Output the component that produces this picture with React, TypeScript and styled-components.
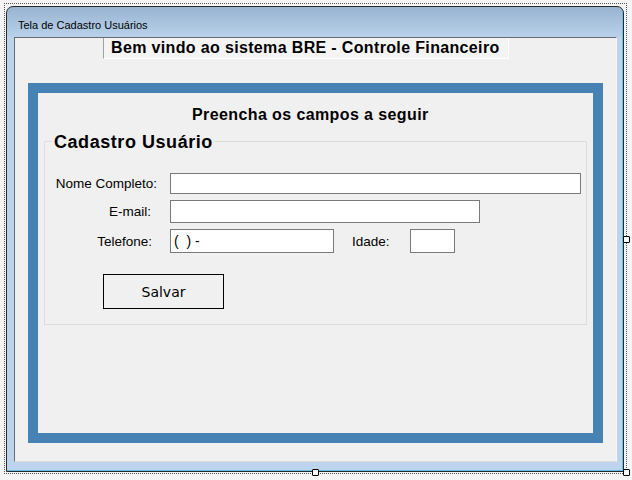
import React from "react";
import styled, { createGlobalStyle } from "styled-components";

const Global = createGlobalStyle`
  html, body { margin: 0; padding: 0; background: #f4f4f4; }
  body { font-family: "Liberation Sans", Arial, sans-serif; color: #000; }
  * { box-sizing: border-box; }
`;

const Stage = styled.div`
  width: 632px;
  height: 480px;
  padding: 3px 0 0 4px;
  background: #f4f4f4;
`;

const Selection = styled.div`
  position: relative;
  width: fit-content;
  border: 1px dotted #555;
  padding: 2px 2px 1px 1px;
`;

const Handle = styled.div<{ $left?: number; $right?: number; $top?: number; $bottom?: number }>`
  position: absolute;
  width: 7px;
  height: 7px;
  background: #fff;
  border: 1px solid #000;
  border-radius: 1px;
  ${(p) => (p.$left !== undefined ? `left: ${p.$left}px;` : "")}
  ${(p) => (p.$right !== undefined ? `right: ${p.$right}px;` : "")}
  ${(p) => (p.$top !== undefined ? `top: ${p.$top}px;` : "")}
  ${(p) => (p.$bottom !== undefined ? `bottom: ${p.$bottom}px;` : "")}
`;

const Window = styled.div`
  width: 618px;
  height: 466px;
  display: flex;
  flex-direction: column;
  border: 1px solid #2a2a2a;
  border-radius: 7px 7px 0 0;
  background: linear-gradient(to bottom, #99b4d1 0px, #b9d1ea 30px, #bcd4ec 30px);
  box-shadow: inset -1px -1px 0 #5cc3ea;
`;

const TitleBar = styled.div`
  height: 30px;
  padding: 12px 0 0 11px;
  font-family: "Liberation Sans", Arial, sans-serif;
  font-size: 11px;
  line-height: 13px;
  color: #000;
`;

const Client = styled.div`
  flex: 1;
  margin: 0 6px 9px 7px;
  border: 1px solid;
  border-color: #6a6a6a #f8f8f8 #dcdcdc #6a6a6a;
  background: #f0f0f0;
  display: flex;
  flex-direction: column;
`;

const Header = styled.div`
  margin-left: 88px;
  width: 406px;
  height: 21px;
  padding-left: 7px;
  background: #f4f4f4;
  border-left: 1px solid #a0a0a0;
  border-right: 1px solid #fff;
  border-bottom: 1px solid #fff;
  font-size: 16px;
  font-weight: bold;
  letter-spacing: 0.35px;
  line-height: 20px;
  white-space: nowrap;
`;

const Frame = styled.div`
  margin: 24px 0 0 13px;
  width: 575px;
  height: 360px;
  border: 10px solid #4682b4;
  padding: 12px 6px 0;
  display: flex;
  flex-direction: column;
`;

const Heading = styled.div`
  margin-left: 148px;
  font-size: 16px;
  font-weight: bold;
  letter-spacing: 0.4px;
  line-height: 20px;
  white-space: nowrap;
`;

const Group = styled.fieldset`
  margin: 5px 0 0;
  padding: 0;
  min-width: 0;
  height: 195px;
  border: 1px solid #dcdcdc;
`;

const Legend = styled.legend`
  margin-left: 7px;
  padding: 2px 2px 0;
  font-size: 18px;
  font-weight: bold;
  letter-spacing: 0.55px;
  line-height: 20px;
`;

const Rows = styled.div`
  display: flex;
  flex-direction: column;
  gap: 6px;
  padding-top: 21px;
`;

const Row = styled.div`
  display: flex;
  align-items: center;
`;

const Label = styled.label<{ $pr: number }>`
  width: 113px;
  padding-right: ${(p) => p.$pr}px;
  text-align: right;
  font-size: 13.5px;
  white-space: nowrap;
`;

const SideLabel = styled.label`
  width: 58px;
  margin-left: 18px;
  font-size: 13.5px;
`;

const Field = styled.input<{ $w: number; $h: number; $ml?: number }>`
  width: ${(p) => p.$w}px;
  height: ${(p) => p.$h}px;
  margin: 0 0 0 ${(p) => p.$ml ?? 12}px;
  padding: 0 3px;
  border: 1px solid #7a7a7a;
  border-radius: 0;
  background: #fff;
  font-family: "Liberation Sans", Arial, sans-serif;
  font-size: 14px;
  color: #000;
  outline: none;
`;

const SaveButton = styled.button`
  margin: 21px 0 0 58px;
  width: 121px;
  height: 35px;
  border: 1px solid #000;
  border-radius: 0;
  background: #f0f0f0;
  font-family: "DejaVu Sans", sans-serif;
  font-size: 14px;
  color: #000;
  padding: 0;
`;

export default function App() {
  return (
    <>
      <Global />
      <Stage>
        <Selection>
          <Window>
            <TitleBar>Tela de Cadastro Usuários</TitleBar>
            <Client>
              <Header>Bem vindo ao sistema BRE - Controle Financeiro</Header>
              <Frame>
                <Heading>Preencha os campos a seguir</Heading>
                <Group>
                  <Legend>Cadastro Usuário</Legend>
                  <Rows>
                    <Row>
                      <Label $pr={1}>Nome Completo:</Label>
                      <Field $w={411} $h={21} readOnly />
                    </Row>
                    <Row>
                      <Label $pr={7}>E-mail:</Label>
                      <Field $w={310} $h={23} readOnly />
                    </Row>
                    <Row>
                      <Label $pr={6}>Telefone:</Label>
                      <Field $w={164} $h={24} readOnly value={"(\u00a0\u00a0) -"} />
                      <SideLabel>Idade:</SideLabel>
                      <Field $w={45} $h={24} $ml={0} readOnly />
                    </Row>
                  </Rows>
                  <SaveButton>Salvar</SaveButton>
                </Group>
              </Frame>
            </Client>
          </Window>
          <Handle $right={-4} $top={232} />
          <Handle $left={307} $bottom={-3} />
          <Handle $right={-4} $bottom={-3} />
        </Selection>
      </Stage>
    </>
  );
}
